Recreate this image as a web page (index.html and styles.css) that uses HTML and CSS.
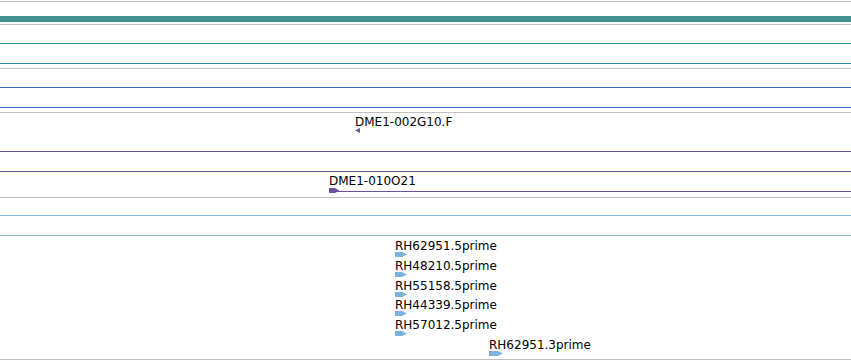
FILE: index.html
```html
<!DOCTYPE html>
<html>
<head>
<meta charset="utf-8">
<link rel="stylesheet" href="styles.css">
</head>
<body>
<div class="tracks">
  <div class="row h1"></div>
  <div class="row gray h22 ruler"><div class="ruler-bar"></div></div>
  <div class="row gray h18"></div>
  <div class="row teal h19"></div>
  <div class="row teal h4"></div>
  <div class="row gray h18"></div>
  <div class="row blue h19"></div>
  <div class="row blue h4"></div>
  <div class="row gray h38 feat-track pad-a">
    <div class="feature" style="margin-left:355px">
      <div class="label">DME1-002G10.F</div>
      <svg class="glyph" width="6" height="5" viewBox="0 0 6 5"><polygon points="0,2.5 5,0 5,5" fill="#6a51a3"/></svg>
    </div>
  </div>
  <div class="row purple h19"></div>
  <div class="row purple h25 feat-track pad-b">
    <div class="feature" style="margin-left:329px">
      <div class="label">DME1-010O21</div>
      <div class="span-line">
        <svg class="glyph" width="11" height="5" viewBox="0 0 11 5"><polygon points="0,0 6,0 10,2.5 10,3 6,5 0,5" fill="#6a51a3"/></svg>
        <div class="extend"></div>
      </div>
    </div>
  </div>
  <div class="row gray h17"></div>
  <div class="row lblue h19"></div>
  <div class="row lblue h123 feat-track pad-c">
    <div class="feature est" style="margin-left:395px">
      <div class="label">RH62951.5prime</div>
      <svg class="glyph" width="13" height="5" viewBox="0 0 13 5"><polygon points="0,0 7,0 12,2.5 7,5 0,5" fill="#7cb3dc"/></svg>
    </div>
    <div class="feature est" style="margin-left:395px">
      <div class="label">RH48210.5prime</div>
      <svg class="glyph" width="13" height="5" viewBox="0 0 13 5"><polygon points="0,0 7,0 12,2.5 7,5 0,5" fill="#7cb3dc"/></svg>
    </div>
    <div class="feature est" style="margin-left:395px">
      <div class="label">RH55158.5prime</div>
      <svg class="glyph" width="13" height="5" viewBox="0 0 13 5"><polygon points="0,0 7,0 12,2.5 7,5 0,5" fill="#7cb3dc"/></svg>
    </div>
    <div class="feature est" style="margin-left:395px">
      <div class="label">RH44339.5prime</div>
      <svg class="glyph" width="13" height="5" viewBox="0 0 13 5"><polygon points="0,0 7,0 12,2.5 7,5 0,5" fill="#7cb3dc"/></svg>
    </div>
    <div class="feature est" style="margin-left:395px">
      <div class="label">RH57012.5prime</div>
      <svg class="glyph" width="13" height="5" viewBox="0 0 13 5"><polygon points="0,0 7,0 12,2.5 7,5 0,5" fill="#7cb3dc"/></svg>
    </div>
    <div class="feature est" style="margin-left:489px">
      <div class="label">RH62951.3prime</div>
      <svg class="glyph" width="15" height="5" viewBox="0 0 15 5"><polygon points="0,0 9,0 14,2.5 9,5 0,5" fill="#7cb3dc"/></svg>
    </div>
  </div>
  <div class="row gray h10"></div>
</div>
</body>
</html>
```

FILE: styles.css
```css
html, body {
  margin: 0;
  padding: 0;
  background: #ffffff;
}
body {
  font-family: "DejaVu Sans", sans-serif;
  font-size: 12px;
  color: #000000;
  width: 851px;
  overflow: hidden;
}
.tracks {
  display: flex;
  flex-direction: column;
}
.row {
  box-sizing: content-box;
}
.gray { border-top: 1px solid #c0c0c0; }
.teal { border-top: 1px solid #2a8fad; }
.blue { border-top: 1px solid #3d6db8; }
.purple { border-top: 1px solid #6a51a3; }
.lblue { border-top: 1px solid #88b8dc; }

.h1 { height: 1px; }
.h4 { height: 4px; }
.h10 { height: 10px; }
.h17 { height: 17px; }
.h18 { height: 18px; }
.h19 { height: 19px; }
.h22 { height: 22px; }
.h25 { height: 25px; }
.h38 { height: 38px; }
.h123 { height: 123px; }

.ruler {
  display: flex;
  flex-direction: column;
}
.ruler-bar {
  margin-top: 14px;
  height: 6px;
  background: #419190;
}

.feat-track {
  display: flex;
  flex-direction: column;
}
.pad-a { padding-top: 3px; height: 35px; }
.pad-b { padding-top: 3px; height: 22px; }
.pad-c { padding-top: 4px; height: 119px; }

.feature {
  display: flex;
  flex-direction: column;
  align-items: flex-start;
}
.est {
  height: 20px;
}
.label {
  line-height: 12px;
  height: 12px;
  white-space: nowrap;
}
.glyph {
  display: block;
}
.span-line {
  display: flex;
  align-items: center;
  width: 522px;
  margin-top: 1px;
}
.extend {
  flex: 1;
  height: 1px;
  margin-left: -4px;
  margin-top: 1px;
  background: #6a51a3;
}
```
